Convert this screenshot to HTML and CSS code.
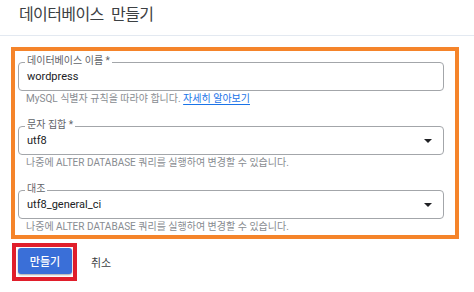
FILE: index.html
```html
<!DOCTYPE html>
<html lang="ko">

<head>
    <meta charset="UTF-8">
    <meta name="viewport" content="width=device-width, initial-scale=1.0">
    <title>데이터베이스 만들기</title>
    <link rel="stylesheet" href="styles.css">
</head>

<body>
    <div class="header">
        <h1 class="title">데이터베이스 만들기</h1>
    </div>
    <div class="form">
        <div class="group">
            <div class="field">
                <span class="label">데이터베이스 이름 *</span>
                <span class="value">wordpress</span>
            </div>
            <p class="hint">MySQL 식별자 규칙을 따라야 합니다. <a href="#">자세히 알아보기</a></p>
        </div>
        <div class="group">
            <div class="field select">
                <span class="label">문자 집합 *</span>
                <span class="value">utf8</span>
                <svg class="arrow" width="8" height="4" viewBox="0 0 8 4"><path d="M0 0h8L4 4z"/></svg>
            </div>
            <p class="hint">나중에 ALTER DATABASE 쿼리를 실행하여 변경할 수 있습니다.</p>
        </div>
        <div class="group">
            <div class="field select">
                <span class="label">대조</span>
                <span class="value">utf8_general_ci</span>
                <svg class="arrow" width="8" height="4" viewBox="0 0 8 4"><path d="M0 0h8L4 4z"/></svg>
            </div>
            <p class="hint">나중에 ALTER DATABASE 쿼리를 실행하여 변경할 수 있습니다.</p>
        </div>
    </div>
    <div class="actions">
        <div class="mark">
            <button class="btn-create">만들기</button>
        </div>
        <span class="btn-cancel">취소</span>
    </div>
</body>

</html>
```
FILE: styles.css
```css
* {
    margin: 0;
    padding: 0;
    box-sizing: border-box;
}

body {
    background: #fff;
    font-family: Roboto, "Noto Sans CJK KR", sans-serif;
    color: #202124;
}

.header {
    height: 36px;
    border-bottom: 1px solid #e3e9f1;
}

.title {
    font-size: 16px;
    font-weight: 400;
    letter-spacing: -0.6px;
    word-spacing: 4px;
    line-height: 30px;
    padding-left: 19px;
    color: #3c4043;
}

.form {
    width: 448px;
    margin: 11px 0 0 11px;
    border: 4px solid #f5842a;
    padding: 11px 11px 1px 3px;
}

.group + .group {
    margin-top: 20px;
}

.field {
    position: relative;
    height: 29px;
    border: 1px solid #a3a6aa;
    border-radius: 4px;
    padding: 0 11px 0 8px;
    display: flex;
    align-items: center;
    justify-content: space-between;
}

.label {
    position: absolute;
    top: -8px;
    left: 6px;
    padding: 0 2px;
    background: #fff;
    font-size: 10px;
    line-height: 12px;
    color: #5f6368;
}

.value {
    font-size: 11px;
    color: #202124;
}

.arrow {
    fill: #202124;
}

.hint {
    margin-top: 1px;
    padding-left: 8px;
    font-size: 10px;
    line-height: 14px;
    color: #888c91;
}

.hint a {
    color: #1a73e8;
    text-decoration: underline;
    text-underline-offset: 2px;
}

.actions {
    display: flex;
    align-items: center;
    margin: 4px 0 0 12px;
}

.mark {
    border: 4px solid #e01e2b;
    padding: 1px 1px 3px 2px;
}

.btn-create {
    display: block;
    width: 54px;
    height: 26px;
    border: none;
    border-radius: 3px;
    background: #3a6fd8;
    box-shadow: 0 1px 2px rgba(0, 0, 0, .35);
    color: #fff;
    font-family: Roboto, "Noto Sans CJK KR", sans-serif;
    font-size: 11px;
    font-weight: 500;
}

.btn-cancel {
    margin-left: 14px;
    font-size: 11px;
    color: #3c4043;
}
```
